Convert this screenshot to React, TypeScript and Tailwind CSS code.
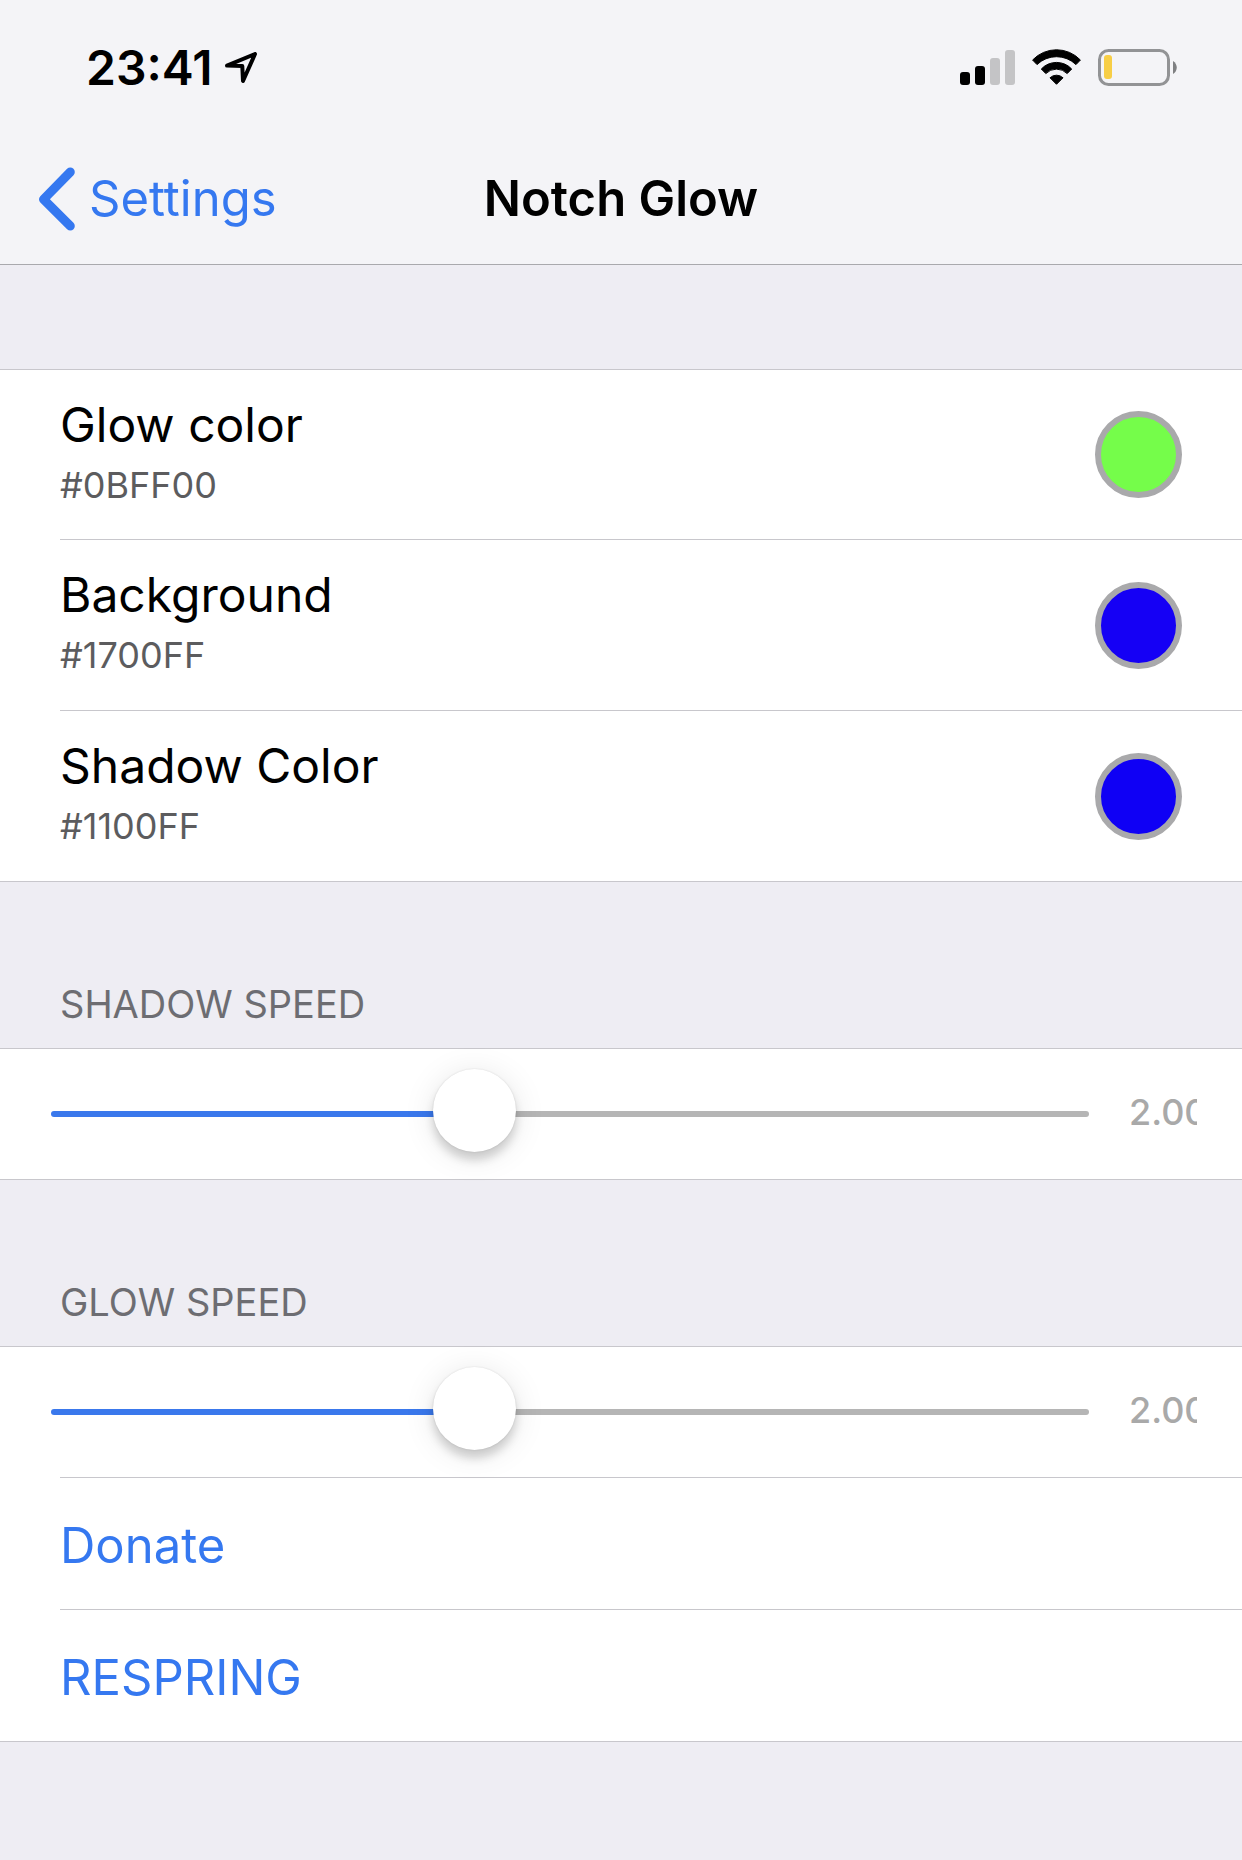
import { useState } from "react";
import type { CSSProperties } from "react";

function LocationIcon() {
  return (
    <svg className="h-8 w-8" viewBox="0 0 32 32" fill="none" stroke="currentColor" strokeWidth="4" strokeLinejoin="round" aria-hidden="true">
      <path d="M2 13.6 L30 2 L18 29 L17.3 14 Z" />
    </svg>
  );
}

function SignalIcon() {
  return (
    <svg className="h-[37px] w-[55px]" viewBox="0 0 55 37" role="img" aria-label="Signal: 2 of 4 bars">
      <rect x="0" y="23" width="10" height="13" rx="3" fill="#000" />
      <rect x="15" y="17" width="10" height="19" rx="3" fill="#000" />
      <rect x="30" y="9" width="10" height="27" rx="3" fill="#c4c4c6" />
      <rect x="45" y="1" width="10" height="35" rx="3" fill="#c4c4c6" />
    </svg>
  );
}

function WifiIcon() {
  return (
    <svg className="h-[37px] w-[49px]" viewBox="0 0 49 37" stroke="#000" strokeWidth="1" strokeLinejoin="round" role="img" aria-label="Wi-Fi">
      <path d="M0.6 11 A33 33 0 0 1 48.4 11 L44 15.6 A28 28 0 0 0 5 15.6 Z" />
      <path d="M9.3 20 A20.8 20.8 0 0 1 39.7 20 L35.2 24.6 A15 15 0 0 0 13.8 24.6 Z" />
      <path d="M18 28.8 A9.4 9.4 0 0 1 31 28.8 L24.5 35.3 Z" />
    </svg>
  );
}

function BatteryIcon() {
  return (
    <svg className="h-[37px] w-[79px]" viewBox="0 0 79 37" role="img" aria-label="Battery low">
      <rect x="1.5" y="1.5" width="69" height="34" rx="9" fill="none" stroke="#929395" strokeWidth="3" />
      <rect x="6" y="6" width="8" height="24" rx="3" fill="#f7ce46" />
      <path d="M75 12 C80 15 80 22 75 25 Z" fill="#7f8082" />
    </svg>
  );
}

function ChevronIcon() {
  return (
    <svg className="h-16 w-[37px]" viewBox="0 0 37 64" fill="none" stroke="currentColor" strokeWidth="9" strokeLinecap="round" strokeLinejoin="round" aria-hidden="true">
      <path d="M32.3 5 L5.5 32.3 L32.3 59" />
    </svg>
  );
}

type ColorRowProps = { label: string; hex: string; swatch: string };

function ColorRow({ label, hex, swatch }: ColorRowProps) {
  return (
    <li className="group pl-[60px]">
      <button
        type="button"
        className="flex h-[171px] w-full items-center justify-between border-t border-[#c8c7cc] pr-[60px] text-left group-first:h-[169px] group-first:border-t-0"
      >
        <span className="flex flex-col">
          <span className="text-[48px] leading-[60px] text-black">{label}</span>
          <span className="text-[36px] leading-[60px] text-[#5c5c5e]">{hex}</span>
        </span>
        <span className={`size-[87px] shrink-0 rounded-full border-6 border-[#a9a9ab] ${swatch}`} />
      </button>
    </li>
  );
}

function SliderRow({ id }: { id: string }) {
  const [value, setValue] = useState(2);
  const fill = { "--fill": `${(value / 5) * 100}%` } as CSSProperties;
  return (
    <div className="flex h-[130px] items-center pr-[45px] pl-[51px]">
      <input
        id={id}
        type="range"
        min={0}
        max={5}
        step={0.01}
        value={value}
        onChange={(e) => setValue(Number(e.target.value))}
        style={fill}
        className="h-[84px] min-w-0 flex-1 cursor-pointer appearance-none bg-transparent outline-none [&::-webkit-slider-runnable-track]:h-[6px] [&::-webkit-slider-runnable-track]:rounded-full [&::-webkit-slider-runnable-track]:bg-[linear-gradient(to_right,#3a78ec_var(--fill),#b5b5b5_var(--fill))] [&::-webkit-slider-thumb]:mt-[-42px] [&::-webkit-slider-thumb]:size-[83px] [&::-webkit-slider-thumb]:appearance-none [&::-webkit-slider-thumb]:rounded-full [&::-webkit-slider-thumb]:bg-white [&::-webkit-slider-thumb]:shadow-[0_0_2px_rgba(0,0,0,0.12),0_8px_10px_rgba(0,0,0,0.16),0_4px_32px_rgba(0,0,0,0.1)]"
      />
      <output htmlFor={id} className="ml-10 w-[68px] overflow-hidden pb-1 text-[36px] leading-[44px] font-medium whitespace-nowrap text-[#a9a9a9]">
        {value.toFixed(2)}
      </output>
    </div>
  );
}

function SectionLabel({ htmlFor, children }: { htmlFor: string; children: string }) {
  return (
    <label htmlFor={htmlFor} className="flex h-[166px] items-end px-[60px] pb-[21px] text-[38px] leading-[46px] text-[#6d6d72]">
      {children}
    </label>
  );
}

function ActionRow({ children }: { children: string }) {
  return (
    <div className="pl-[60px]">
      <button type="button" className="flex h-[132px] w-full items-center border-t border-[#c8c7cc] pt-1 text-left text-[49px] leading-[60px] text-[#3578f0]">
        {children}
      </button>
    </div>
  );
}

export default function App() {
  return (
    <div className="min-h-screen bg-[#eeedf3] font-['Inter',sans-serif]">
      <header className="border-b border-[#a9a9ad] bg-[#f4f4f7]">
        <div className="flex h-[132px] items-center justify-between pt-1 pr-[65px] pl-[86px] text-black">
          <div className="flex items-center gap-3">
            <time className="text-[48px] leading-[56px] font-semibold">23:41</time>
            <LocationIcon />
          </div>
          <div className="flex items-center gap-[17px] pb-0.5">
            <SignalIcon />
            <WifiIcon />
            <BatteryIcon />
          </div>
        </div>
        <nav className="grid h-[132px] grid-cols-[1fr_auto_1fr] items-center px-[38px] pt-0.5">
          <a href="#settings" className="flex items-center gap-[14px] text-[49px] leading-[60px] text-[#3578f0]">
            <ChevronIcon />
            Settings
          </a>
          <h1 className="text-[49px] leading-[60px] font-semibold text-black">Notch Glow</h1>
        </nav>
      </header>

      <main className="pt-[104px]">
        <ul className="border-y border-[#c8c7cc] bg-white">
          <ColorRow label="Glow color" hex="#0BFF00" swatch="bg-[#75fd4a]" />
          <ColorRow label="Background" hex="#1700FF" swatch="bg-[#1500f5]" />
          <ColorRow label="Shadow Color" hex="#1100FF" swatch="bg-[#0f00f5]" />
        </ul>

        <SectionLabel htmlFor="shadow-speed">SHADOW SPEED</SectionLabel>
        <section className="border-y border-[#c8c7cc] bg-white">
          <SliderRow id="shadow-speed" />
        </section>

        <SectionLabel htmlFor="glow-speed">GLOW SPEED</SectionLabel>
        <section className="border-y border-[#c8c7cc] bg-white">
          <SliderRow id="glow-speed" />
          <ActionRow>Donate</ActionRow>
          <ActionRow>RESPRING</ActionRow>
        </section>
      </main>
    </div>
  );
}
